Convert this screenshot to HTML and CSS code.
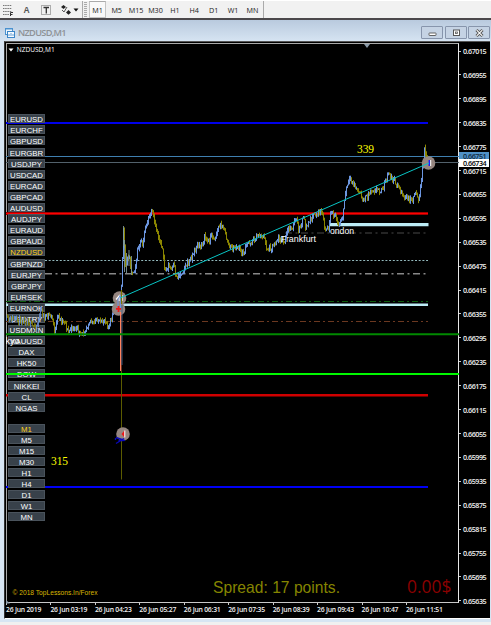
FILE: index.html
```html
<!DOCTYPE html>
<html lang="en">
<head>
<meta charset="utf-8">
<title>NZDUSD,M1</title>
<link rel="stylesheet" href="styles.css">
</head>
<body>
<div class="toolbar">
  <svg class="tools" width="82" height="19" viewBox="0 0 82 19">
    <g stroke="#777" stroke-dasharray="1.5 .7"><path d="M3 5.5h9M3 8.5h9M3 11.5h9M3 14.5h6"/></g>
    <path d="M10.5 16v-3.500h2.500M10.500 14.500h2" stroke="#333" fill="none"/>
    <text x="23.500" y="13" class="tool-a">A</text>
    <rect x="41.500" y="5.500" width="9" height="9" fill="none" stroke="#666" stroke-dasharray="1 1"/>
    <path d="M43.500 7.500h5.500M46.300 7.500v6" stroke="#333" stroke-width="1.300"/>
    <path d="M61 7l2.500-2 2.500 2-2.500 2zM66 12.500l2.500-2.500 2.500 2.500-2.500 2.300z" fill="#222"/>
    <path d="M62 10l2 2 3-5" stroke="#555" fill="none"/>
    <path d="M73.500 8.500h5l-2.500 3z" fill="#111"/>
  </svg>
  <span class="rule"></span><span class="grip"></span>
  <div class="periods"><b class="on">M1</b><b>M5</b><b>M15</b><b>M30</b><b>H1</b><b>H4</b><b>D1</b><b>W1</b><b>MN</b></div>
</div>
<div class="window">
  <div class="titlebar">
    <svg width="10" height="10" viewBox="0 0 10 10"><rect x=".5" y=".5" width="7" height="6" fill="#eef6fd" stroke="#4a91cf"/><path d="M0 1h8" stroke="#4a91cf"/><rect x="2.500" y="3.500" width="7" height="6" fill="#f6fbff" stroke="#3c86c8"/><path d="M4 8V6M6 8V5M8 8V6" stroke="#3c86c8" stroke-width=".8"/></svg>
    <span class="caption">NZDUSD,M1</span>
    <span class="wbtn"><svg width="21" height="12"><rect x="7" y="6" width="7" height="2.500" rx=".5" fill="#fff" stroke="#555" stroke-width=".9"/></svg></span>
    <span class="wbtn"><svg width="21" height="12"><rect x="7.500" y="3" width="6" height="5.500" fill="#fff" stroke="#555"/><rect x="9.500" y="5" width="2" height="1.500" fill="none" stroke="#555" stroke-width=".8"/></svg></span>
    <span class="wbtn"><svg width="21" height="12"><path d="M7.500 3l6 6M13.500 3l-6 6" stroke="#555" stroke-width="3"/><path d="M7.700 3.200l5.600 5.600M13.300 3.200l-5.600 5.600" stroke="#fff" stroke-width="1.100"/></svg></span>
  </div>
  <div class="chart">
    <div class="plot">
      <!-- chart canvas, origin at the plot's top left (6,44) -->
      <svg class="layer" width="453" height="560" viewBox="6 44 453 560">
        <g fill="none">
          <path d="M6 123H428" stroke="#0000ea" stroke-width="2"/>
          <path d="M6 156.500H459" stroke="#3f7fb0"/>
          <path d="M6 162.500H459" stroke="#52616b"/>
          <path d="M6 213.500H428" stroke="#a00000" stroke-width="3"/><path d="M6 213.500H428" stroke="#ff0000"/>
          <path d="M45 260.500H428" stroke="#93b9bd" stroke-dasharray="2 1.700"/>
          <path d="M45 273.700H428" stroke="#888" stroke-width="1.400" stroke-dasharray="7 3.500 2 3.500"/>
          <path d="M6 301.500H428" stroke="#0c5c0c" stroke-dasharray="6 3 2 3"/>
          <path d="M6 321.500H428" stroke="#6b3820" stroke-dasharray="6 3 2 3"/>
          <path d="M6 304.800H428" stroke="#bcecf5" stroke-width="2.600"/>
          <path d="M6 395.300H428" stroke="#d00000" stroke-width="2.400"/>
          <path d="M6 487H428" stroke="#0000f5" stroke-width="2"/>
          <path d="M285 233H428" stroke="#484848" stroke-width="1.200" stroke-dasharray="7 3.500 2 3.500"/>
          <path d="M329 224.700H428.500" stroke="#bcecf5" stroke-width="3.200"/>
        </g>
        <path d="M364 44h6l-3 4z" fill="#8c9cab"/>
        <path d="M6 600v3.500h4z" fill="#8c9cab"/>
        <path d="M8.500 48.500h5l-2.500 3z" fill="#fff"/>
        <text x="16.700" y="52.300" class="sym" textLength="38" lengthAdjust="spacingAndGlyphs">NZDUSD,M1</text>
        <g id="bars"></g>
        <path d="M123.500 226v20M124.500 240v32M126.500 253v20M131.500 256v19M129 250v16" stroke="#7f9a9a" stroke-width=".9"/>
        <path d="M121.500 371V479.500" stroke="#5c5c00"/>
        <g fill="#968680"><circle cx="119.500" cy="298" r="6.800"/><circle cx="118.500" cy="309" r="6.800"/><circle cx="123" cy="434" r="6.800"/><circle cx="428.500" cy="163" r="6.800"/></g>
        <path d="M116 299.500l3-3.500v5M122 295v6" stroke="#fff" stroke-width="1.300" fill="none"/>
        <path d="M118 311v-12l2.500-4v14" stroke="#6d94e0" fill="none"/>
        <path d="M116 308.800h5M118.500 306v6" stroke="#f01818" stroke-width="1.800"/>
        <path d="M121.500 290v14" stroke="#7a7500" stroke-width="1.200"/>
        <path d="M120.700 312V371" stroke="#ff805c" stroke-width="1.400"/>
        <path d="M122 305V365" stroke="#42608a" stroke-width=".9"/>
        <path d="M121.500 434l3-3.500v7z" fill="#ef1717"/><path d="M124.800 430.500v7" stroke="#fff"/>
        <path d="M116 437.500l9 3M116 443.500l8-5M118.500 440.500h5M115.500 438v2" stroke="#0808b8" stroke-width="1.400" fill="none"/>
        <path d="M429.300 160v6" stroke="#1818ff" stroke-width="1.500"/><path d="M430.700 160v6" stroke="#fff"/>
        <path d="M120 298L429 163" stroke="#08c5c5" stroke-width="1"/>
        <text x="357" y="153.300" class="count" textLength="17">339</text>
        <text x="51" y="464.800" class="count" textLength="17">315</text>
        <text x="280.500" y="242" class="session" textLength="35.500" lengthAdjust="spacingAndGlyphs">Frankfurt</text>
        <text x="330" y="233.600" class="session" textLength="24" lengthAdjust="spacingAndGlyphs">ondon</text>
        <text x="12.500" y="595" class="credit" textLength="85" lengthAdjust="spacingAndGlyphs">© 2018 TopLessons.In/Forex</text>
        <text x="213" y="593" class="spread" textLength="127" lengthAdjust="spacingAndGlyphs">Spread: 17 points.</text>
        <text x="407" y="593.300" class="profit" textLength="44.500" lengthAdjust="spacingAndGlyphs">0.00$</text>
      </svg>
      <div class="switcher">
        <div class="stack"><i>EURUSD</i><i>EURCHF</i><i>GBPUSD</i><i>EURGBR</i><i>USDJPY</i><i>USDCAD</i><i>EURCAD</i><i>GBPCAD</i><i>AUDUSD</i><i>AUDJPY</i><i>EURAUD</i><i>GBPAUD</i><i class="cur">NZDUSD</i><i>GBPNZD</i><i>EURJPY</i><i>GBPJPY</i><i>EURSEK</i><i>EURNOK</i><i>USDTRY</i><i>USDMXN</i><i>XAUUSD</i><i>DAX</i><i>HK50</i><i>DOW</i><i>NIKKEI</i><i>CL</i><i>NGAS</i></div>
        <div class="stack"><i class="cur">M1</i><i>M5</i><i>M15</i><i>M30</i><i>H1</i><i>H4</i><i>D1</i><i>W1</i><i>MN</i></div>
      </div>
      <svg class="layer" width="453" height="560" viewBox="6 44 453 560">
        <g id="bars-front" opacity=".8"></g>
        <path d="M6 334.300H459" stroke="#008a00" stroke-width="2"/>
        <path d="M6 374H459" stroke="#00f800" stroke-width="2"/>
        <text x="5.500" y="343.500" class="session" textLength="14" lengthAdjust="spacingAndGlyphs">kyo</text>
      </svg>
    </div>
    <div class="prices" id="prices"><em class="bid">0.66751</em><em class="ask">0.66734</em></div>
    <div class="times" id="times"></div>
  </div>
</div>
<script src="chart.js"></script>
</body>
</html>
```
FILE: styles.css
```css
* { box-sizing: border-box; }
body { margin: 0; width: 491px; height: 625px; overflow: hidden; background: #f0f0f0; font-family: "Open Sans", sans-serif; }
.toolbar { display: flex; height: 20px; background: #f1f1f1; border-top: 1px solid #fff; border-bottom: 2px solid #4b484b; }
.tools { display: block; margin-top: -1px; }
.tool-a { font: bold 8.5px "Liberation Sans", sans-serif; fill: #555; }
.rule { width: 1px; background: #aaa; }
.grip { width: 3px; margin: 1px 2px 1px 1px; background: repeating-linear-gradient(#aaa 0 1px, #eee 1px 2px); }
.periods { display: flex; height: 17px; border-right: 1px solid #aaa; padding-right: 1px; }
.periods b { width: 19.4px; text-align: center; font: 7.2px/18px "Open Sans", sans-serif; color: #222; }
.periods .on { width: 17px; margin-right: 1px; background: #f9f9f9; border: 1px solid #c4c4c4; border-top-color: #aaa; line-height: 16px; }
.window { height: 602px; padding: 0 1px 4px 4px; background: linear-gradient(#b9cade, #d7e5f3 22px); }
.titlebar { display: flex; align-items: flex-start; height: 21px; padding: 6px 0 0 1px; }
.titlebar > svg { margin-top: 2px; }
.caption { flex: 1; margin: 0 0 0 3px; font: 600 9.2px/13px "Open Sans", sans-serif; letter-spacing: -.68px; color: #8e9296; }
.wbtn { width: 22px; height: 13px; margin-left: 1.5px; border: 1px solid #8795ac; border-radius: 1px; background: #c5d3e4; }
.wbtn svg { display: block; }
.chart { display: grid; grid-template: 560px 15px / 453px 31px; width: 486px; height: 578px; padding: 1px 0 0 1px; border-top: 1px solid #555; border-left: 1px solid #333; border-bottom: 1px solid #fff; background: #000; }
.plot { position: relative; border-top: 1px solid #aaa; border-left: 1px solid #aaa; border-right: 1px solid #e8e8e8; border-bottom: 1px solid #c8c8c8; }
.layer { position: absolute; left: -1px; top: 0; }
.sym { font: 7.5px "Open Sans", sans-serif; fill: #fff; }
.count { font: 11.5px "Liberation Serif", serif; fill: #ff0; }
.session { font: 9.3px "Liberation Sans", sans-serif; fill: #fff; }
.credit { font: 7.2px "Liberation Sans", sans-serif; fill: #dbb800; }
.spread { font: 16.5px "Liberation Sans", sans-serif; fill: #858500; }
.profit { font: 19px "Open Sans", sans-serif; fill: #8b0000; }
.switcher { position: absolute; left: 1px; top: 70.3px; width: 37px; }
.stack { display: grid; row-gap: 2.1px; margin-bottom: 12px; }
.stack i { height: 9px; background: #38414a; border: .5px solid #4a535c; font: 7.8px/9px "Liberation Sans", sans-serif; text-align: center; color: #fff; }
.stack .cur { color: #ffd21c; }
.prices { position: relative; display: flex; flex-direction: column; justify-content: space-between; height: 563px; padding-top: 3px; }
.prices span, .prices em { display: flex; align-items: center; height: 10px; font: 600 7.2px/10px "Open Sans", sans-serif; letter-spacing: -.5px; color: #f2f2f2; }
.prices span::before { content: ""; width: 2px; height: 1px; margin-right: 2px; background: #ccc; }
.prices em { position: absolute; left: 0; width: 30px; height: 8px; padding-left: 4px; line-height: 8px; }
.bid { top: 109px; background: #4f91c6; }
.prices .bid { color: #10283c; }
.ask { top: 116px; background: #fff; }
.prices .ask { color: #000; }
.times { grid-column: 1 / 3; display: flex; padding-top: 1px; }
.times span { flex: 0 0 44.45px; font: 600 6.8px/10px "Open Sans", sans-serif; letter-spacing: -.22px; white-space: nowrap; color: #f2f2f2; text-indent: -.7px; }
.times span::before { content: ""; display: block; width: 1px; height: 2px; margin: -1px 0 0 0; background: #ccc; }
```
FILE: chart.js
```js
// Price path as x,y turning points; one bar is drawn for each pixel between them.
const path = [6,320,12,319,18,320,28,321,33,327,37,325,41,310,45,318,50,315,53,320,55,334,58,315,61,321,64,319,68,332,73,327,77,329,80,336,83,334,86,328,90,319,94,325,97,318,101,325,105,318,109,328,112,316,116,306,119,298,121,296,122,275,123.3,228,124.5,245,126,272,128,255,130,260,132,274,134,270,136,262,138,248,141,243,143,247,145,228,148,220,151,213,153,214,155,226,159,238,162,245,164,265,166,272,168,265,171,270,174,266,176,277,180,275,184,268,190,260,197,246,200,248,205,236,208,243,211,235,215,238,219,227,223,224,226,237,230,248,233,248,237,247,243,254,248,243,254,240,259,234,264,237,267,249,272,247,276,241,280,238,284,243,288,230,293,226,296,219,299,231,303,217,306,228,310,220,314,216,318,212,322,214,325,230,329,228,331,213,335,216,338,222,342,222,344,206,346,190,349,181,352,182,356,188,360,195,364,201,370,191,376,189,382,191,388,174,392,178,398,185,402,195,408,199,412,200,416,190,419,200,422,175,424,150,425,148,426,158,428,165];
let seed = 11;
const rnd = () => (seed = (seed * 16807) % 2147483647) / 2147483647;
function at(x) {
  let i = 0;
  while (i < path.length - 4 && path[i + 2] < x) i += 2;
  const t = (x - path[i]) / (path[i + 2] - path[i]);
  return path[i + 1] + t * (path[i + 3] - path[i + 1]);
}
let bars = "", front = "", prev = at(6);
for (let x = 6.5; x < 428; x += 1) {
  const y = at(x) + (rnd() - .5) * 6.5;
  const top = Math.min(prev, y) - rnd() * 3, bottom = Math.max(prev, y) + rnd() * 3;
  const colour = y < prev ? "#6c96e0" : "#8c8600";
  const bar = `<path d="M${x} ${top.toFixed(1)}V${bottom.toFixed(1)}" stroke="${colour}"/>`;
  if (x < 45) front += bar; else bars += bar;
  prev = y;
}
document.getElementById("bars").innerHTML = bars;
document.getElementById("bars-front").innerHTML = front;

let labels = "";
for (let p = 67015; p >= 65635; p -= 60) labels += `<span>0.${p}</span>`;
document.getElementById("prices").insertAdjacentHTML("afterbegin", labels);
document.getElementById("times").innerHTML = ["2019", "03:19", "04:23", "05:27", "06:31", "07:35", "08:39", "09:43", "10:47", "11:51"].map(t => `<span>26 Jun ${t}</span>`).join("");
```
